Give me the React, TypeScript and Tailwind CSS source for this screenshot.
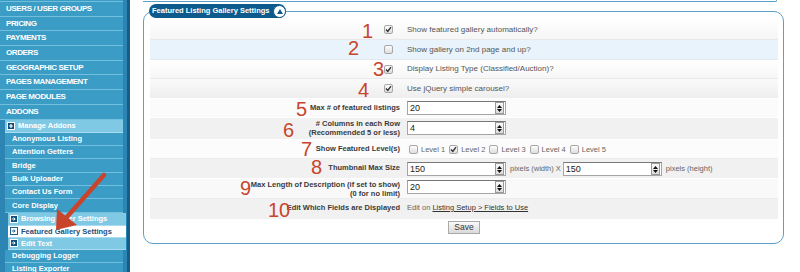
import React from 'react';

const font = "font-['Liberation_Sans',Arial,Helvetica,sans-serif]";

const NavIcon: React.FC<{ kind: 'plus' | 'dark' | 'light' }> = ({ kind }) => (
    <svg width="8" height="8" viewBox="0 0 8 8" className="shrink-0">
        {kind === 'plus' && (
            <>
                <rect x="0.5" y="0.5" width="7" height="7" fill="#0f4f7e" stroke="#ffffff" />
                <path d="M4 2v4M2 4h4" stroke="#ffffff" strokeWidth="1.2" />
            </>
        )}
        {kind === 'dark' && (
            <>
                <rect x="0.5" y="0.5" width="7" height="7" fill="#0f4f7e" stroke="#ffffff" />
                <path d="M1.8 4h3M3.6 2.6 5.2 4 3.6 5.4" stroke="#ffffff" strokeWidth="1" fill="none" />
            </>
        )}
        {kind === 'light' && (
            <>
                <rect x="0.5" y="0.5" width="7" height="7" fill="#ffffff" stroke="#1d5f8f" />
                <path d="M1.8 4h3M3.6 2.6 5.2 4 3.6 5.4" stroke="#1d5f8f" strokeWidth="1" fill="none" />
            </>
        )}
    </svg>
);

const Sidebar: React.FC = () => {
    const top = ['USERS / USER GROUPS', 'PRICING', 'PAYMENTS', 'ORDERS', 'GEOGRAPHIC SETUP', 'PAGES MANAGEMENT', 'PAGE MODULES', 'ADDONS'];
    const subs = ['Anonymous Listing', 'Attention Getters', 'Bridge', 'Bulk Uploader', 'Contact Us Form', 'Core Display'];
    return (
        <aside className="relative w-[130px] h-full shrink-0 bg-[#125f8a]">
            <div className="w-[127px] h-full bg-[#2c85b2] flex flex-col overflow-hidden">
                <div className="w-[123px] h-[2px] shrink-0 bg-[#3b9cc6] border-b border-[#72bedd]" />
                {top.map((t) => (
                    <div key={t} className="w-[123px] h-[14.7px] shrink-0 bg-[#3b9cc6] border-b border-[#72bedd] flex items-center pl-[6px] text-white font-bold text-[8px] tracking-[-0.4px] leading-none">
                        {t}
                    </div>
                ))}
                <div className="ml-[5px] w-[118px] h-[13.3px] shrink-0 bg-[#80c9e4] border-b border-[#a9dcef] flex items-center gap-[3px] pl-[2px] text-white font-bold text-[7.5px] leading-none">
                    <NavIcon kind="plus" />
                    Manage Addons
                </div>
                {subs.map((s) => (
                    <div key={s} className="ml-[5px] w-[118px] h-[13.3px] shrink-0 bg-[#3b9cc6] border-b border-[#72bedd] flex items-center pl-[7px] text-white font-bold text-[7.5px] leading-none">
                        {s}
                    </div>
                ))}
                <div className="ml-[8px] w-[118px] h-[13.3px] shrink-0 bg-[#80c9e4] border-b border-[#a9dcef] flex items-center gap-[3px] pl-[2px] text-white font-bold text-[7.5px] leading-none">
                    <NavIcon kind="dark" />
                    Browsing Filter Settings
                </div>
                <div className="ml-[8px] w-[118px] h-[12px] shrink-0 bg-white border-b border-[#a9dcef] flex items-center gap-[3px] pl-[2px] text-[#1b4f7c] font-bold text-[7.5px] leading-none">
                    <NavIcon kind="light" />
                    Featured Gallery Settings
                </div>
                <div className="ml-[8px] w-[118px] h-[12px] shrink-0 bg-[#80c9e4] border-b border-[#a9dcef] flex items-center gap-[3px] pl-[2px] text-white font-bold text-[7.5px] leading-none">
                    <NavIcon kind="dark" />
                    Edit Text
                </div>
                {['Debugging Logger', 'Listing Exporter'].map((s) => (
                    <div key={s} className="ml-[5px] w-[118px] h-[12.8px] shrink-0 bg-[#3b9cc6] border-b border-[#72bedd] flex items-center pl-[7px] text-white font-bold text-[7.5px] leading-none">
                        {s}
                    </div>
                ))}
            </div>
            <svg className="absolute left-0 top-0 pointer-events-none" width="130" height="272" viewBox="0 0 130 272">
                <path d="M104 175 L66 218" stroke="#c8452c" strokeWidth="4.5" strokeLinecap="round" />
                <polygon points="56,230 57,209 77,225" fill="#c8452c" />
            </svg>
        </aside>
    );
};

const Check: React.FC<{ checked?: boolean }> = ({ checked }) => (
    <span className="relative inline-block w-[9px] h-[9px] shrink-0 rounded-[2px] border border-[#a8a8a8] bg-gradient-to-b from-[#fdfdfd] to-[#dedede]">
        {checked && (
            <svg className="absolute left-[0px] top-[0px]" width="7" height="7" viewBox="0 0 7 7">
                <path d="M1 3.6 2.8 5.4 6 1.2" stroke="#333" strokeWidth="1.4" fill="none" />
            </svg>
        )}
    </span>
);

const NumInput: React.FC<{ value: string }> = ({ value }) => (
    <div className="relative w-[99px] h-[14px] shrink-0 border border-[#a5a5a5] border-t-[#777] bg-white text-[9px] leading-[12px] pl-[2px] text-[#222]">
        {value}
        <span className="absolute right-[1px] top-[0px] w-[9px] h-[12px] border border-[#999] bg-gradient-to-b from-[#fafafa] to-[#dcdcdc] flex flex-col items-center justify-center gap-[1px]">
            <svg width="5" height="3" viewBox="0 0 5 3"><path d="M0 3 2.5 0 5 3Z" fill="#111" /></svg>
            <svg width="5" height="3" viewBox="0 0 5 3"><path d="M0 0 2.5 3 5 0Z" fill="#111" /></svg>
        </span>
    </div>
);

const Num: React.FC<{ n: string; x: number; y: number }> = ({ n, x, y }) => (
    <span
        className="absolute text-[20px] leading-none text-[#c8452c] pointer-events-none"
        style={{ left: x - 150, top: y - 23 }}
    >
        {n}
    </span>
);

const Label: React.FC<{ children: React.ReactNode; pt?: string }> = ({ children, pt = 'pt-[4px]' }) => (
    <div className={`w-[250px] shrink-0 ${pt} text-right font-bold text-[7.5px] leading-[9px] text-[#3a3a3a]`}>{children}</div>
);

const Featured: React.FC = () => {
    const levels = [false, true, false, false, false];
    return (
        <main className="flex-1 h-full">
            <div className="ml-[13px] w-[634px] h-[2px] border-b border-r border-[#5c9fc8] rounded-br-[6px]" />
            <div className="relative ml-[13px] mt-[9px] w-[641px] h-[233px] border border-[#5c9fc8] rounded-[10px] pt-[8px] pl-[6px] pr-[5px]">
                <div className="absolute left-[5px] -top-[8px] h-[14px] w-[137px] flex items-center justify-between rounded-full bg-[#0d5b8c] pl-[3px] pr-0 text-white font-bold text-[7.5px] leading-none">
                    <span>Featured Listing Gallery Settings</span>
                    <span className="w-[13px] h-[13px] rounded-full bg-white border-[1.5px] border-[#0d5b8c] flex items-center justify-center">
                        <svg width="6" height="5" viewBox="0 0 6 5"><path d="M0 5 3 0 6 5Z" fill="#0d5b8c" /></svg>
                    </span>
                </div>

                <div className="relative flex flex-col text-[8px] text-[#555]">
                    <div className="h-[20px] flex items-center bg-gradient-to-b from-[#ffffff] to-[#f5f5f5] border-b border-[#e9e9e9]">
                        <div className="w-[250px] shrink-0 flex justify-end pr-[7px]"><Check checked /></div>
                        <div className="pl-[7px]">Show featured gallery automatically?</div>
                    </div>
                    <div className="h-[20px] flex items-center bg-[#e8f3fb] border-b border-[#e2e8ec]">
                        <div className="w-[250px] shrink-0 flex justify-end pr-[7px]"><Check /></div>
                        <div className="pl-[7px]">Show gallery on 2nd page and up?</div>
                    </div>
                    <div className="h-[19px] flex items-center bg-gradient-to-b from-[#ffffff] to-[#f7f7f7] border-b border-[#e9e9e9]">
                        <div className="w-[250px] shrink-0 flex justify-end pr-[7px]"><Check checked /></div>
                        <div className="pl-[7px]">Display Listing Type (Classified/Auction)?</div>
                    </div>
                    <div className="h-[20px] flex items-center bg-gradient-to-b from-[#fafafa] to-[#eeeeee] border-b border-white">
                        <div className="w-[250px] shrink-0 flex justify-end pr-[7px]"><Check checked /></div>
                        <div className="pl-[7px]">Use jQuery simple carousel?</div>
                    </div>
                    <div className="h-[19px] flex items-start bg-[#fbfbfb] border-b border-white">
                        <Label>Max # of featured listings</Label>
                        <div className="pl-[7px] pt-[2px]"><NumInput value="20" /></div>
                    </div>
                    <div className="h-[22px] flex items-start bg-[#f1f1f1] border-b border-white">
                        <Label pt="pt-[1px]">
                            # Columns in each Row
                            <br />
                            (Recommended 5 or less)
                        </Label>
                        <div className="pl-[7px] pt-[3px]"><NumInput value="4" /></div>
                    </div>
                    <div className="h-[19px] flex items-start bg-[#fcfcfc] border-b border-[#ececec]">
                        <Label>Show Featured Level(s)</Label>
                        <div className="pl-[9px] pt-[3px] flex items-center text-[7.5px] text-[#666]">
                            {levels.map((c, i) => (
                                <span key={i} className="flex items-center gap-[3px] mr-[4px]">
                                    <Check checked={c} />
                                    <span className="pt-[1px]">Level {i + 1}</span>
                                </span>
                            ))}
                        </div>
                    </div>
                    <div className="h-[20px] flex items-start bg-[#f1f1f1] border-b border-white">
                        <Label>Thumbnail Max Size</Label>
                        <div className="pl-[7px] pt-[3px] flex items-center text-[7.5px] text-[#666]">
                            <NumInput value="150" />
                            <span className="pl-[4px] pr-[2px]">pixels (width) X</span>
                            <NumInput value="150" />
                            <span className="pl-[4px]">pixels (height)</span>
                        </div>
                    </div>
                    <div className="h-[20px] flex items-start bg-[#f9f9f9] border-b border-[#ececec]">
                        <Label pt="pt-[1px]">
                            Max Length of Description (if set to show)
                            <br />
                            (0 for no limit)
                        </Label>
                        <div className="pl-[7px] pt-[1px]"><NumInput value="20" /></div>
                    </div>
                    <div className="h-[20px] flex items-start bg-[#f1f1f1]">
                        <Label>Edit Which Fields are Displayed</Label>
                        <div className="pl-[7px] pt-[4px] text-[7.5px] leading-[9px] text-[#666]">
                            Edit on <span className="underline text-[#333]">Listing Setup &gt; Fields to Use</span>
                        </div>
                    </div>

                    <Num n="1" x={362} y={24} />
                    <Num n="2" x={348} y={41} />
                    <Num n="3" x={373} y={62} />
                    <Num n="4" x={358} y={83} />
                    <Num n="5" x={296} y={102} />
                    <Num n="6" x={283} y={123} />
                    <Num n="7" x={301} y={142} />
                    <Num n="8" x={311} y={160} />
                    <Num n="9" x={240} y={181} />
                    <Num n="10" x={268} y={203} />
                </div>

                <div className="flex justify-center mt-[2px]">
                    <button className="h-[13px] px-[5px] border border-[#a9a9a9] bg-gradient-to-b from-[#fafafa] to-[#dadada] text-[8.5px] leading-none text-[#333]">
                        Save
                    </button>
                </div>
            </div>
        </main>
    );
};

export default function App() {
    return (
        <div className={`w-[800px] h-[272px] flex overflow-hidden bg-white ${font}`}>
            <Sidebar />
            <Featured />
        </div>
    );
}
